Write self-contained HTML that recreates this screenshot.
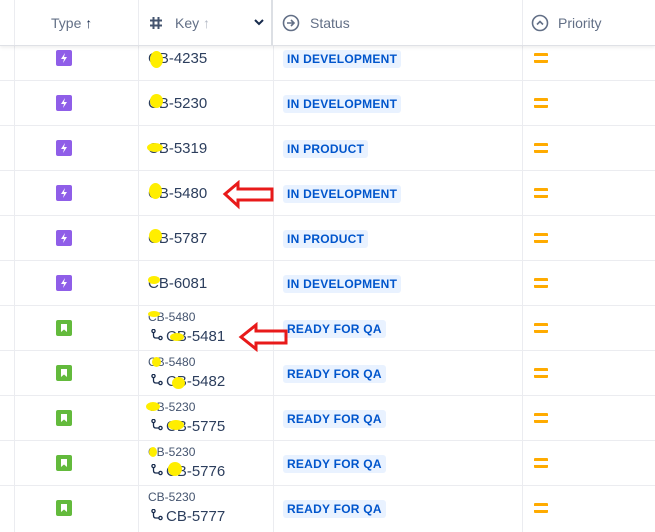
<!DOCTYPE html><html><head><style>
body{margin:0;width:655px;height:532px;overflow:hidden;background:#fff;font-family:"Liberation Sans",sans-serif;position:relative}
.v{position:absolute;top:0;bottom:0;width:1px;background:#ebecf0}
.h{position:absolute;left:0;right:0;height:1px;background:#ebecf0}
.hd{position:absolute;top:0;left:0;right:0;height:45px;border-bottom:1px solid #dfe1e6;box-shadow:0 2px 3px rgba(0,0,0,.06);color:#626f86;font-size:14px;background:#fff}
.hd span{position:absolute;top:15px}
.ty{position:absolute;left:56px;width:16px;height:16px;border-radius:2px}
.ty.b{background:#8f5ee8}.ty.s{background:#63ba3c}
.ty svg{position:absolute;left:0;top:0}
.key{position:absolute;left:148px;font-size:15px;color:#2c3e5d}
.par{position:absolute;left:148px;font-size:12px;color:#44546f}
.sub{position:absolute;left:151px}
.st{position:absolute;left:283px;background:#e9f2ff;color:#0055cc;font-weight:bold;font-size:12px;padding:2px 4px;border-radius:3px;letter-spacing:.25px}
.pr{position:absolute;left:534px;width:14px;height:10px;border-top:3px solid #ffab00;border-bottom:3px solid #ffab00;box-sizing:border-box;border-radius:1px}
.y{position:absolute;background:#ffee00;border-radius:50%}
</style></head><body>
<svg width="0" height="0" style="position:absolute"><defs>
<symbol id="bolt" viewBox="0 0 16 16"><path d="M9 3L5 9h3l-1 4 4-6H8z" fill="#fff"/></symbol>
<symbol id="bm" viewBox="0 0 16 16"><path d="M5 4h6v8l-3-2.5L5 12z" fill="#fff"/></symbol>
<symbol id="br" viewBox="0 0 12 12"><circle cx="2.5" cy="2" r="1.6" fill="none" stroke="#172b4d" stroke-width="1.3"/><circle cx="9.5" cy="9" r="1.6" fill="none" stroke="#172b4d" stroke-width="1.3"/><path d="M2.5 3.6V6.5Q2.5 9 5 9h2.9" fill="none" stroke="#172b4d" stroke-width="1.3"/></symbol>
</defs></svg>
<div class="v" style="left:14px"></div><div class="v" style="left:138px"></div><div class="v" style="left:273px"></div><div class="v" style="left:522px"></div>
<div class="h" style="top:80px"></div><div class="h" style="top:125px"></div><div class="h" style="top:170px"></div><div class="h" style="top:215px"></div><div class="h" style="top:260px"></div><div class="h" style="top:305px"></div><div class="h" style="top:350px"></div><div class="h" style="top:395px"></div><div class="h" style="top:440px"></div><div class="h" style="top:485px"></div>
<div class="hd">
<div style="position:absolute;left:14px;top:0;bottom:0;width:1px;background:#ebecf0"></div>
<div style="position:absolute;left:138px;top:0;bottom:0;width:1px;background:#ebecf0"></div>
<div style="position:absolute;left:271px;top:0;bottom:0;width:2px;background:#dcdfe4"></div>
<div style="position:absolute;left:522px;top:0;bottom:0;width:1px;background:#ebecf0"></div>
<span style="left:51px">Type <b style="color:#172b4d">&#8593;</b></span>
<svg style="position:absolute;left:149px;top:16px" width="14" height="14"><path d="M4.5 1v12M9.5 1v12M1 4.5h12M1 9.5h12" stroke="#44546f" stroke-width="2"/></svg>
<span style="left:175px">Key <span style="position:static;color:#b3b9c4">&#8593;</span></span>
<svg style="position:absolute;left:254px;top:19px" width="10" height="7"><path d="M1 1l4 4 4-4" stroke="#172b4d" stroke-width="2" fill="none"/></svg>
<svg style="position:absolute;left:282px;top:14px" width="18" height="18"><circle cx="9" cy="9" r="7.5" stroke="#626f86" stroke-width="1.6" fill="none"/><path d="M5 9h7M9 6l3 3-3 3" stroke="#626f86" stroke-width="1.6" fill="none"/></svg><span style="left:310px">Status</span>
<svg style="position:absolute;left:531px;top:14px" width="18" height="18"><circle cx="9" cy="9" r="7.5" stroke="#626f86" stroke-width="1.6" fill="none"/><path d="M6 10.5l3-3 3 3" stroke="#626f86" stroke-width="1.6" fill="none"/></svg><span style="left:558px">Priority</span>
</div>
<div class="ty b" style="top:50px"><svg width="16" height="16"><use href="#bolt"/></svg></div><div class="key" style="top:50px">CB-4235</div><div class="st" style="top:50px">IN DEVELOPMENT</div><div class="pr" style="top:53px"></div>
<div class="ty b" style="top:95px"><svg width="16" height="16"><use href="#bolt"/></svg></div><div class="key" style="top:95px">CB-5230</div><div class="st" style="top:95px">IN DEVELOPMENT</div><div class="pr" style="top:98px"></div>
<div class="ty b" style="top:140px"><svg width="16" height="16"><use href="#bolt"/></svg></div><div class="key" style="top:140px">CB-5319</div><div class="st" style="top:140px">IN PRODUCT</div><div class="pr" style="top:143px"></div>
<div class="ty b" style="top:185px"><svg width="16" height="16"><use href="#bolt"/></svg></div><div class="key" style="top:185px">CB-5480</div><div class="st" style="top:185px">IN DEVELOPMENT</div><div class="pr" style="top:188px"></div>
<div class="ty b" style="top:230px"><svg width="16" height="16"><use href="#bolt"/></svg></div><div class="key" style="top:230px">CB-5787</div><div class="st" style="top:230px">IN PRODUCT</div><div class="pr" style="top:233px"></div>
<div class="ty b" style="top:275px"><svg width="16" height="16"><use href="#bolt"/></svg></div><div class="key" style="top:275px">CB-6081</div><div class="st" style="top:275px">IN DEVELOPMENT</div><div class="pr" style="top:278px"></div>
<div class="ty s" style="top:320px"><svg width="16" height="16"><use href="#bm"/></svg></div><div class="par" style="top:310px">CB-5480</div><svg class="sub" style="top:329px" width="12" height="12"><use href="#br"/></svg><div class="key" style="top:328px;left:166px">CB-5481</div><div class="st" style="top:320px">READY FOR QA</div><div class="pr" style="top:323px"></div>
<div class="ty s" style="top:365px"><svg width="16" height="16"><use href="#bm"/></svg></div><div class="par" style="top:355px">CB-5480</div><svg class="sub" style="top:374px" width="12" height="12"><use href="#br"/></svg><div class="key" style="top:373px;left:166px">CB-5482</div><div class="st" style="top:365px">READY FOR QA</div><div class="pr" style="top:368px"></div>
<div class="ty s" style="top:410px"><svg width="16" height="16"><use href="#bm"/></svg></div><div class="par" style="top:400px">CB-5230</div><svg class="sub" style="top:419px" width="12" height="12"><use href="#br"/></svg><div class="key" style="top:418px;left:166px">CB-5775</div><div class="st" style="top:410px">READY FOR QA</div><div class="pr" style="top:413px"></div>
<div class="ty s" style="top:455px"><svg width="16" height="16"><use href="#bm"/></svg></div><div class="par" style="top:445px">CB-5230</div><svg class="sub" style="top:464px" width="12" height="12"><use href="#br"/></svg><div class="key" style="top:463px;left:166px">CB-5776</div><div class="st" style="top:455px">READY FOR QA</div><div class="pr" style="top:458px"></div>
<div class="ty s" style="top:500px"><svg width="16" height="16"><use href="#bm"/></svg></div><div class="par" style="top:490px">CB-5230</div><svg class="sub" style="top:509px" width="12" height="12"><use href="#br"/></svg><div class="key" style="top:508px;left:166px">CB-5777</div><div class="st" style="top:500px">READY FOR QA</div><div class="pr" style="top:503px"></div>
<div class="y" style="left:150px;top:51px;width:13px;height:17px"></div>
<div class="y" style="left:150px;top:94px;width:13px;height:14px"></div>
<div class="y" style="left:147px;top:143px;width:16px;height:9px"></div>
<div class="y" style="left:149px;top:183px;width:13px;height:16px"></div>
<div class="y" style="left:149px;top:229px;width:13px;height:14px"></div>
<div class="y" style="left:148px;top:276px;width:12px;height:8px"></div>
<div class="y" style="left:148px;top:311px;width:12px;height:6px"></div><div class="y" style="left:170px;top:333px;width:14px;height:8px"></div>
<div class="y" style="left:152px;top:357px;width:9px;height:10px"></div><div class="y" style="left:172px;top:377px;width:13px;height:12px"></div>
<div class="y" style="left:146px;top:402px;width:14px;height:9px"></div><div class="y" style="left:168px;top:420px;width:16px;height:10px"></div>
<div class="y" style="left:149px;top:447px;width:8px;height:10px"></div><div class="y" style="left:168px;top:462px;width:14px;height:14px"></div>
<svg style="position:absolute;left:222px;top:180px" width="52" height="30"><path d="M3 14L16 3v6h34v11H16v6z" stroke="#e81a1a" stroke-width="3" fill="none"/></svg>
<svg style="position:absolute;left:238px;top:322px" width="52" height="32"><path d="M3 15L18 3v6h30v12H18v6z" stroke="#e81a1a" stroke-width="3" fill="none"/></svg>
</body></html>
